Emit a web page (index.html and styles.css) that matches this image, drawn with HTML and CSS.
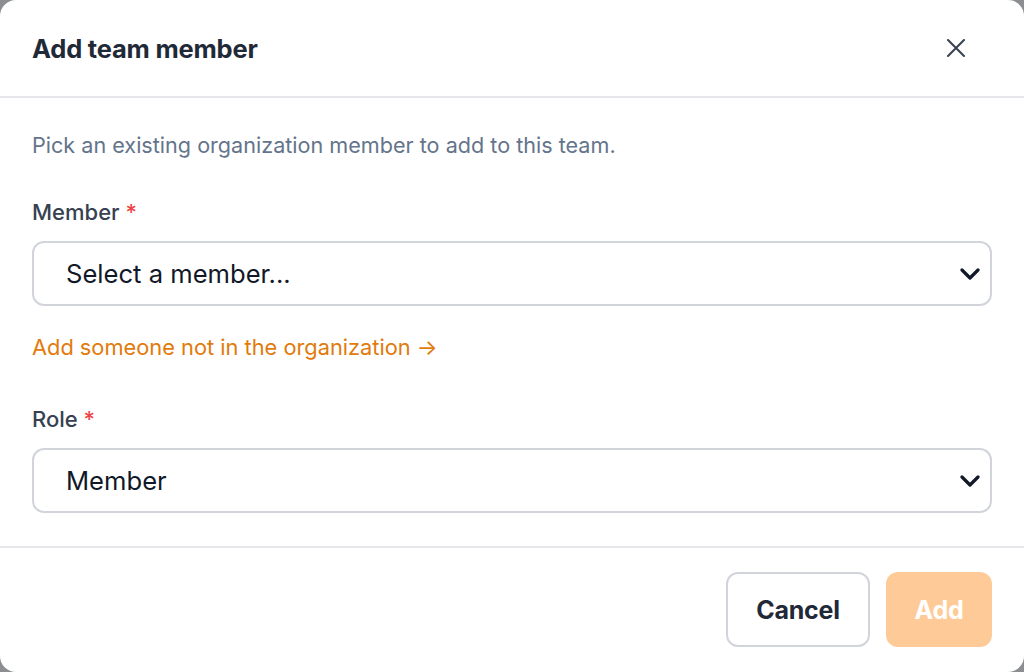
FILE: index.html
```html
<!DOCTYPE html>
<html lang="en">
<head>
    <meta charset="UTF-8">
    <meta name="viewport" content="width=device-width, initial-scale=1.0">
    <title>Add team member</title>
    <link rel="stylesheet" href="styles.css">
</head>
<body>
    <div class="modal">
        <div class="modal-header">
            <h2 class="modal-title">Add team member</h2>
            <button class="close-btn" type="button" aria-label="Close">
                <svg width="18" height="18" viewBox="0 0 18 18" fill="none" stroke="currentColor" stroke-width="2" stroke-linecap="round">
                    <path d="M1 1L17 17M17 1L1 17"/>
                </svg>
            </button>
        </div>

        <div class="modal-body">
            <p class="hint">Pick an existing organization member to add to this team.</p>

            <label class="field-label" for="member">Member <span class="req">*</span></label>
            <div class="select-wrap">
                <select id="member" class="select">
                    <option>Select a member...</option>
                </select>
                <!-- chevron drawn over the select -->
                <svg class="chevron" width="20" height="12" viewBox="0 0 20 12" fill="none" stroke="currentColor" stroke-width="3.2" stroke-linecap="round" stroke-linejoin="round">
                    <path d="M2 2L10 10L18 2"/>
                </svg>
            </div>

            <a class="invite-link" href="#">Add someone not in the organization →</a>

            <label class="field-label role-label" for="role">Role <span class="req">*</span></label>
            <div class="select-wrap">
                <select id="role" class="select">
                    <option>Member</option>
                </select>
                <svg class="chevron" width="20" height="12" viewBox="0 0 20 12" fill="none" stroke="currentColor" stroke-width="3.2" stroke-linecap="round" stroke-linejoin="round">
                    <path d="M2 2L10 10L18 2"/>
                </svg>
            </div>
        </div>

        <div class="modal-footer">
            <button class="btn btn-secondary" type="button">Cancel</button>
            <button class="btn btn-primary" type="button" disabled>Add</button>
        </div>
    </div>
</body>
</html>
```

FILE: styles.css
```css
body {
    margin: 0;
    height: 100vh;
    background-color: #8c8e92;
    font-family: Inter, "Noto Sans", sans-serif;
    overflow: hidden;
}

.modal {
    height: 100vh;
    background-color: #fff;
    border-radius: 16px;
    display: flex;
    flex-direction: column;
}

.modal-header {
    height: 96px;
    display: flex;
    align-items: center;
    justify-content: space-between;
    padding: 0 32px;
    border-bottom: 2px solid #e5e7eb;
}

.modal-title {
    margin: 0;
    font-size: 25.5px;
    font-weight: 700;
    letter-spacing: -0.2px;
    color: #1f2937;
}

.close-btn {
    width: 48px;
    height: 48px;
    margin-right: 12px;
    padding: 0;
    border: none;
    background: none;
    color: #374151;
    display: flex;
    align-items: center;
    justify-content: center;
    cursor: pointer;
}

.modal-body {
    padding: 32px 32px 33px;
    display: flex;
    flex-direction: column;
}

.hint {
    margin: 0 0 37px;
    font-size: 21.6px;
    line-height: 30px;
    color: #64748b;
}

.field-label {
    font-size: 22px;
    line-height: 30px;
    font-weight: 500;
    color: #374151;
    margin-bottom: 14px;
}

.req {
    color: #ef4444;
}

.select-wrap {
    position: relative;
}

.select {
    width: 100%;
    height: 65px;
    padding: 0 60px 0 32px;
    border: 2px solid #d1d5db;
    border-radius: 12px;
    background-color: #fff;
    font-family: inherit;
    font-size: 25.6px;
    color: #111827;
    appearance: none;
    -webkit-appearance: none;
}

.chevron {
    position: absolute;
    right: 12px;
    top: 27px;
    color: #111827;
    pointer-events: none;
}

.invite-link {
    margin-top: 26px;
    font-size: 21.8px;
    line-height: 30px;
    color: #e27a0c;
    text-decoration: none;
    align-self: flex-start;
}

.role-label {
    margin-top: 42px;
}

.modal-footer {
    border-top: 2px solid #e5e7eb;
    padding: 24px 32px;
    display: flex;
    justify-content: flex-end;
    gap: 16px;
}

.btn {
    height: 75px;
    padding: 0;
    border-radius: 12px;
    font-family: inherit;
    font-size: 25px;
    font-weight: 700;
    letter-spacing: -0.2px;
    cursor: pointer;
}

.btn-secondary {
    width: 144px;
    background-color: #fff;
    border: 2px solid #d1d5db;
    color: #1f2937;
}

.btn-primary {
    width: 106px;
    background-color: #fecb98;
    border: none;
    color: #fff;
}
```
